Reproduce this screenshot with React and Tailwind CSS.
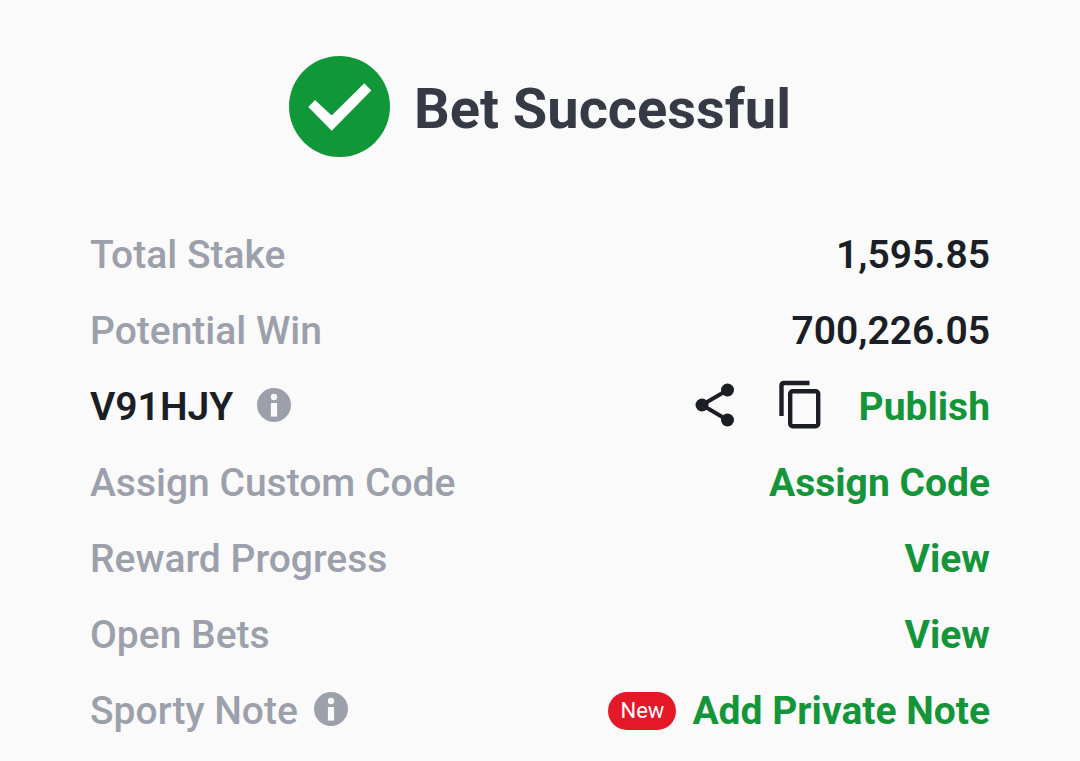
function InfoButton({ label }) {
  return (
    <button type="button" aria-label={label} className="shrink-0 pb-1">
      <svg viewBox="0 0 34 34" className="size-[34px]" aria-hidden="true">
        <circle cx="17" cy="17" r="17" fill="#9ca0ab" />
        <circle cx="17" cy="9" r="3.2" fill="#fafafa" />
        <rect x="13.9" y="15" width="6.2" height="13.6" fill="#fafafa" />
      </svg>
    </button>
  );
}

function ShareIcon() {
  return (
    <svg viewBox="0 0 40 44" className="h-[44px] w-[40px]" aria-hidden="true">
      <path d="M32.5 7 7 22l25.5 15" fill="none" stroke="#1b1e25" strokeWidth="4" />
      <circle cx="32.5" cy="7" r="6.5" fill="#1b1e25" />
      <circle cx="7" cy="22" r="6.5" fill="#1b1e25" />
      <circle cx="32.5" cy="37" r="6.5" fill="#1b1e25" />
    </svg>
  );
}

function CopyIcon() {
  return (
    <svg viewBox="0 0 42 50" className="h-[50px] w-[42px]" aria-hidden="true">
      <path d="M2.5 36V5.500q0-2.500 2.500-2.500h25.500" fill="none" stroke="#1b1e25" strokeWidth="4.4" />
      <rect x="11.2" y="11.2" width="28" height="35" rx="2.5" fill="none" stroke="#1b1e25" strokeWidth="4.4" />
    </svg>
  );
}

function Row({ label, info, dark, children }) {
  return (
    <li className="flex h-[76px] items-center justify-between">
      <div className="flex items-center gap-4">
        <span className={dark ? "mr-2 font-semibold text-[#1b1e25]" : "text-[#9ca0ab]"}>{label}</span>
        {info && <InfoButton label={info} />}
      </div>
      <div className="flex items-center">{children}</div>
    </li>
  );
}

function Action({ children }) {
  return (
    <button type="button" className="font-bold text-[#149539]">
      {children}
    </button>
  );
}

export default function App() {
  return (
    <main className="min-h-screen bg-[#fafafa] px-[90px] pt-14 font-['Roboto',sans-serif] text-[#1b1e25]">
      <header className="flex items-center justify-center gap-6">
        <svg viewBox="0 0 101 101" className="size-[101px]" aria-hidden="true">
          <circle cx="50.5" cy="50.5" r="50.5" fill="#0f9738" />
          <path d="M19.3 51 26 44l16.7 15.5L75.3 27.3l7 7.2L42.7 74.7z" fill="#fff" />
        </svg>
        <h1 className="pt-1 text-[56px] font-bold leading-[64px] text-[#353a45]">Bet Successful</h1>
      </header>

      <ul className="mt-[60px] text-[39px] font-medium leading-[48px]">
        <Row label="Total Stake">
          <span className="font-semibold">1,595.85</span>
        </Row>
        <Row label="Potential Win">
          <span className="font-semibold">700,226.05</span>
        </Row>
        <Row label="V91HJY" info="About booking code" dark>
          <button type="button" aria-label="Share" className="mr-11 pb-1">
            <ShareIcon />
          </button>
          <button type="button" aria-label="Copy code" className="mr-[38px] pb-1">
            <CopyIcon />
          </button>
          <Action>Publish</Action>
        </Row>
        <Row label="Assign Custom Code">
          <Action>Assign Code</Action>
        </Row>
        <Row label="Reward Progress">
          <Action>View</Action>
        </Row>
        <Row label="Open Bets">
          <Action>View</Action>
        </Row>
        <Row label="Sporty Note" info="About Sporty Note">
          <span className="mr-4 rounded-full bg-[#e41827] px-3 text-[22px] font-normal leading-[38px] text-white">New</span>
          <Action>Add Private Note</Action>
        </Row>
      </ul>
    </main>
  );
}
